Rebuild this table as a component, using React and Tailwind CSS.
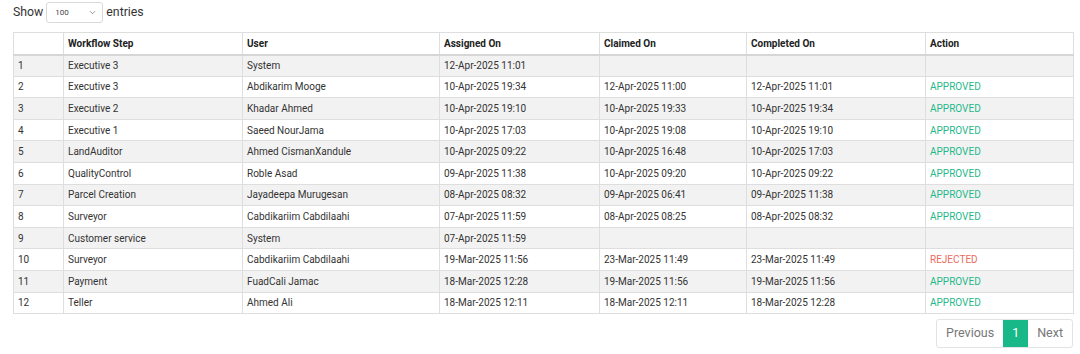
import React from "react";

const rows = [
  ["1", "Executive 3", "System", "12-Apr-2025 11:01", "", "", ""],
  ["2", "Executive 3", "Abdikarim Mooge", "10-Apr-2025 19:34", "12-Apr-2025 11:00", "12-Apr-2025 11:01", "APPROVED"],
  ["3", "Executive 2", "Khadar Ahmed", "10-Apr-2025 19:10", "10-Apr-2025 19:33", "10-Apr-2025 19:34", "APPROVED"],
  ["4", "Executive 1", "Saeed NourJama", "10-Apr-2025 17:03", "10-Apr-2025 19:08", "10-Apr-2025 19:10", "APPROVED"],
  ["5", "LandAuditor", "Ahmed CismanXandule", "10-Apr-2025 09:22", "10-Apr-2025 16:48", "10-Apr-2025 17:03", "APPROVED"],
  ["6", "QualityControl", "Roble Asad", "09-Apr-2025 11:38", "10-Apr-2025 09:20", "10-Apr-2025 09:22", "APPROVED"],
  ["7", "Parcel Creation", "Jayadeepa Murugesan", "08-Apr-2025 08:32", "09-Apr-2025 06:41", "09-Apr-2025 11:38", "APPROVED"],
  ["8", "Surveyor", "Cabdikariim Cabdilaahi", "07-Apr-2025 11:59", "08-Apr-2025 08:25", "08-Apr-2025 08:32", "APPROVED"],
  ["9", "Customer service", "System", "07-Apr-2025 11:59", "", "", ""],
  ["10", "Surveyor", "Cabdikariim Cabdilaahi", "19-Mar-2025 11:56", "23-Mar-2025 11:49", "23-Mar-2025 11:49", "REJECTED"],
  ["11", "Payment", "FuadCali Jamac", "18-Mar-2025 12:28", "19-Mar-2025 11:56", "19-Mar-2025 11:56", "APPROVED"],
  ["12", "Teller", "Ahmed Ali", "18-Mar-2025 12:11", "18-Mar-2025 12:11", "18-Mar-2025 12:28", "APPROVED"],
];

const widths = [50, 179, 197, 160, 147, 179, 148];
const headers = ["", "Workflow Step", "User", "Assigned On", "Claimed On", "Completed On", "Action"];

export default function App() {
  return (
    <div className="w-[1080px] h-[354px] bg-white text-[#333] pl-[13px] pt-[2px]" style={{ fontFamily: "Roboto, 'Noto Sans', sans-serif" }}>
      <div className="flex items-center h-[21px] text-[12.3px] text-[#333]">
        <span>Show</span>
        <div className="ml-[3px] mr-[3px] w-[57px] h-[21px] border border-[#d9d9d9] rounded-[3px] flex items-center justify-between pl-[8px] pr-[6px]">
          <span className="text-[8px] text-[#444]">100</span>
          <svg width="7" height="5" viewBox="0 0 7 5" className="text-[#888]">
            <path d="M1 1.2 L3.5 3.7 L6 1.2" fill="none" stroke="currentColor" strokeWidth="0.9" />
          </svg>
        </div>
        <span>entries</span>
      </div>

      <table className="mt-[9px] w-[1060px] table-fixed border-collapse text-[10px]">
        <colgroup>
          {widths.map((w, i) => (
            <col key={i} style={{ width: w }} />
          ))}
        </colgroup>
        <thead>
          <tr className="h-[22px]">
            {headers.map((h, i) => (
              <th key={i} className="border border-[#dedede] border-b-2 border-b-[#d6d6d6] text-left font-bold text-[#222] pl-[4px] py-0 align-middle">
                {h}
              </th>
            ))}
          </tr>
        </thead>
        <tbody>
          {rows.map((r, ri) => (
            <tr key={ri} className={"h-[21.6px] " + (ri % 2 === 0 ? "bg-[#f2f2f2]" : "bg-white")}>
              {r.map((c, ci) => (
                <td
                  key={ci}
                  className={
                    "border border-[#dedede] pl-[4px] py-0 align-middle whitespace-nowrap " +
                    (ci === 6
                      ? c === "REJECTED"
                        ? "text-[#ec6b5d]"
                        : "text-[#1fb88a]"
                      : "text-[#333]")
                  }
                >
                  {c}
                </td>
              ))}
            </tr>
          ))}
        </tbody>
      </table>

      <div className="w-[1060px] flex justify-end mt-[5px]">
        <div className="flex h-[29px] border border-[#e3e3e3] rounded-[3px] text-[12.5px] text-[#777] overflow-hidden">
          <span className="flex items-center px-[9px]">Previous</span>
          <span className="flex items-center justify-center w-[25px] bg-[#19b888] text-white">1</span>
          <span className="flex items-center px-[9px]">Next</span>
        </div>
      </div>
    </div>
  );
}
